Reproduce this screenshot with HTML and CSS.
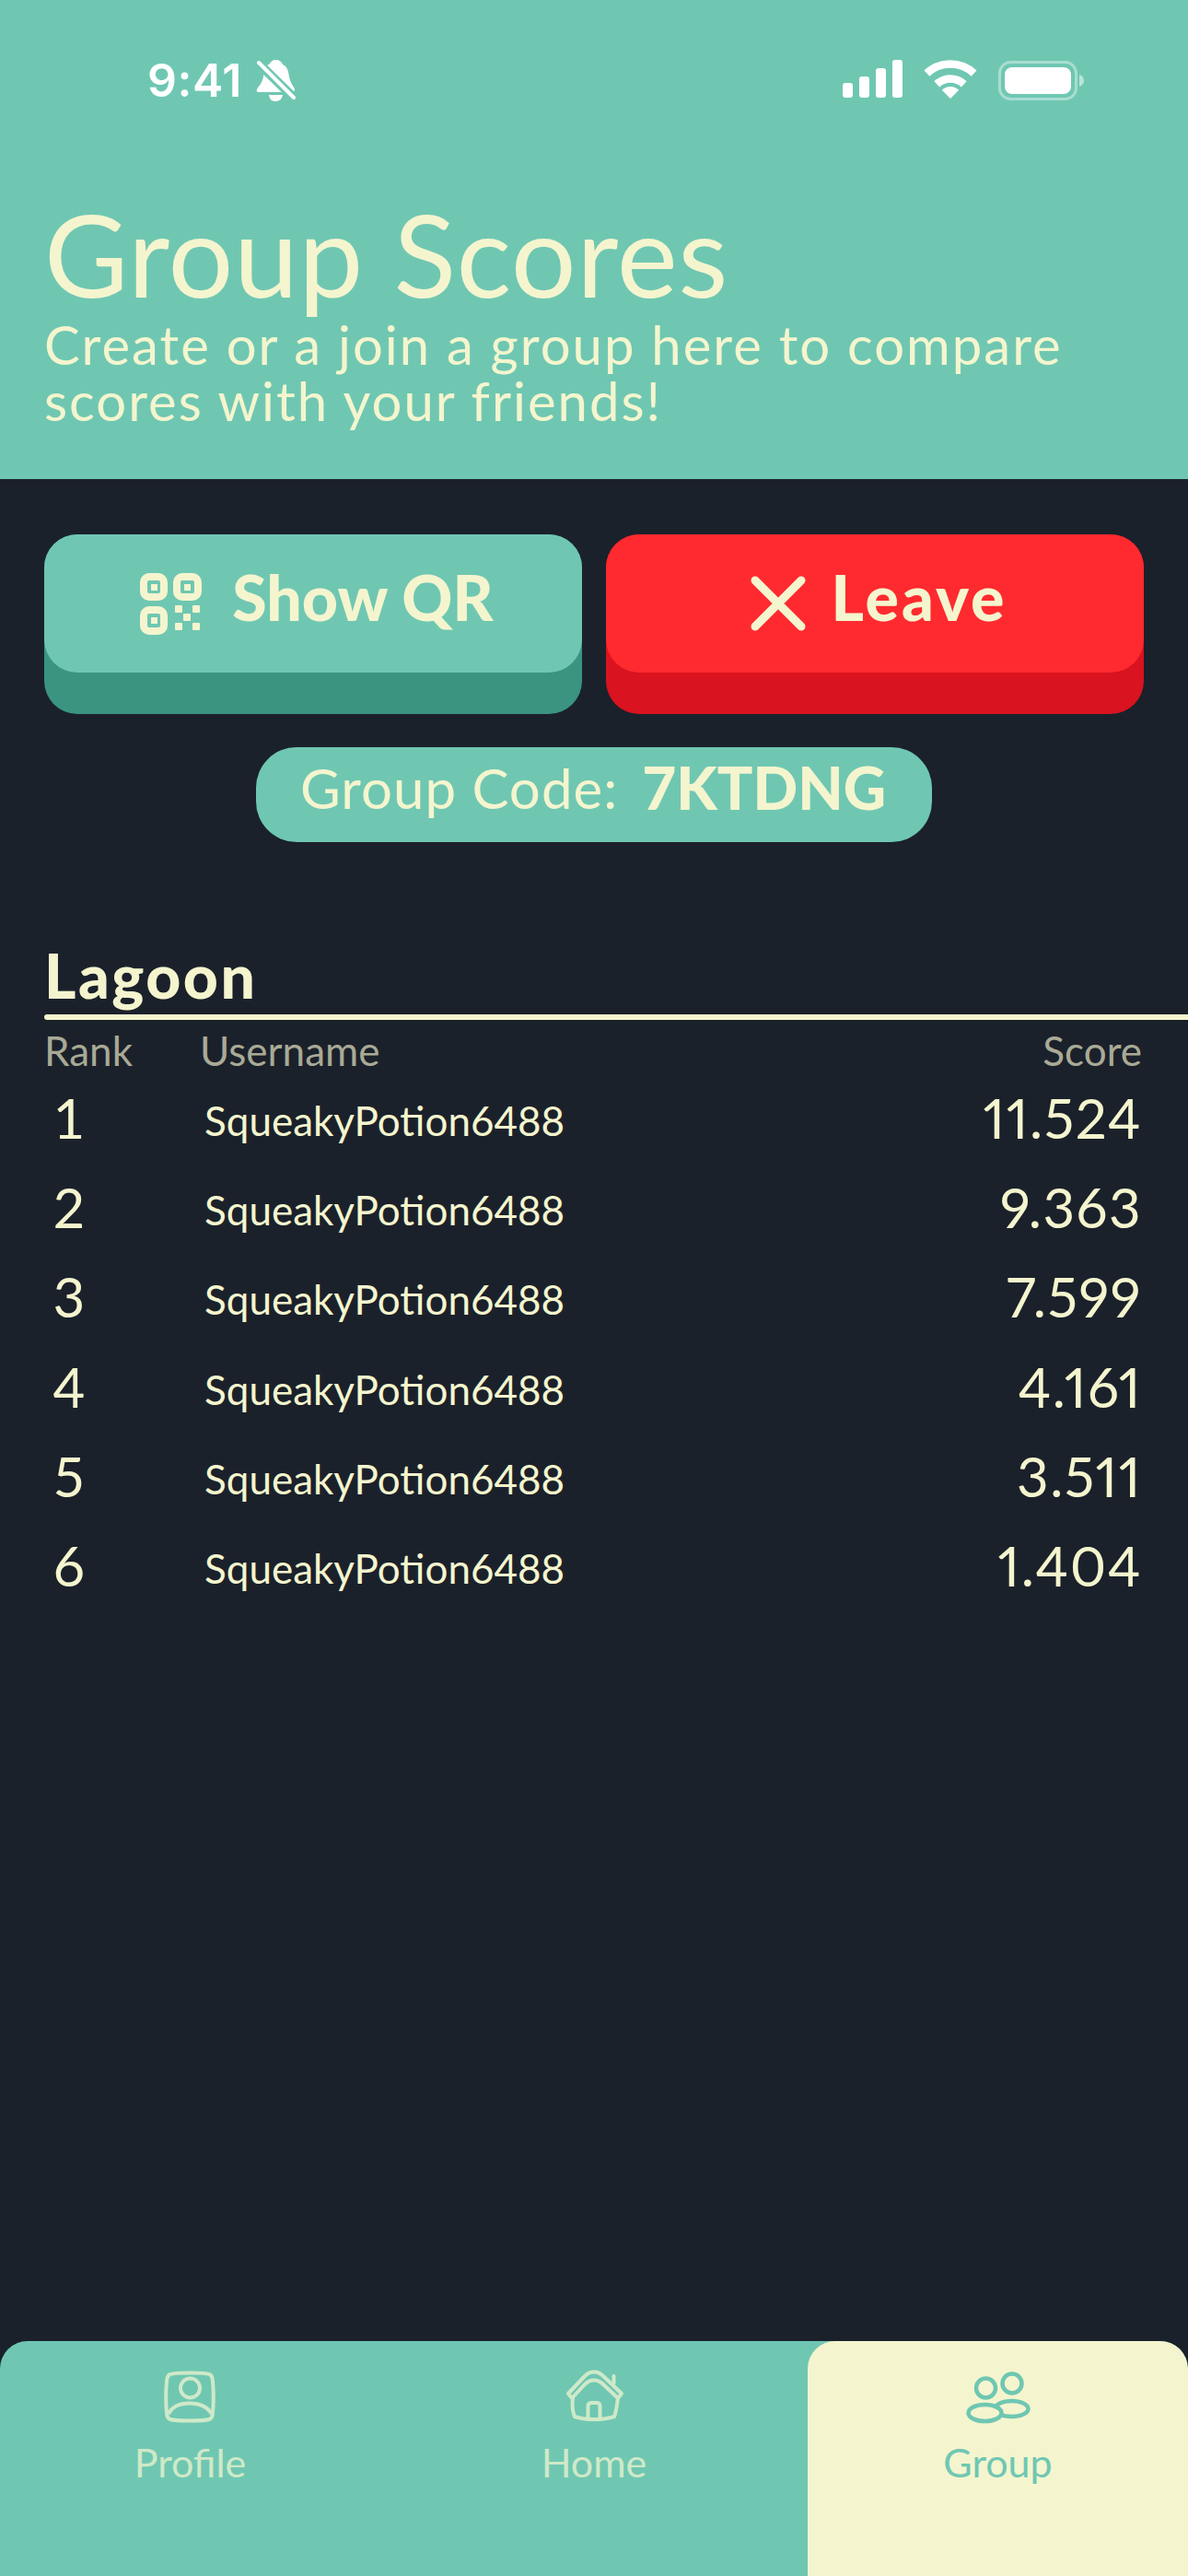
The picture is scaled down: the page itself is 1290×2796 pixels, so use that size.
FILE: index.html
```html
<!DOCTYPE html>
<html lang="en">
<head>
<meta charset="utf-8">
<title>Group Scores</title>
<link rel="stylesheet" href="styles.css">
</head>
<body>
<div class="app">
  <header class="header">
    <div class="status">
      <div class="status-left">
        <span class="time">9:41</span>
        <svg class="bell" width="43" height="47" viewBox="0 0 43 47"><path fill="#fff" d="M21 0C25 0 28 2 29 5C34 7 35 12 36 18C37 25 41 29 42 32C42 34 41 35 39 35L3 35C1 35 0 34 1 32C3 28 7 25 8 18C8 11 11 6 15 4C16 2 18 0 21 0Z"/><path fill="#fff" d="M14 38H29C28 43 25 45 21 45C17 45 15 43 14 38Z"/><path stroke="#6fc7b2" stroke-width="10" d="M0 1L43 43"/><path stroke="#fff" stroke-width="4" stroke-linecap="round" d="M3 3L41 41"/></svg>
      </div>
      <div class="status-right">
        <svg width="65" height="41" viewBox="0 0 65 41"><rect x="0" y="25" width="11" height="16" rx="3" fill="#fff"/><rect x="18" y="18" width="11" height="23" rx="3" fill="#fff"/><rect x="36" y="9" width="11" height="32" rx="3" fill="#fff"/><rect x="54" y="0" width="11" height="41" rx="3" fill="#fff"/></svg>
        <svg class="wifi" width="58" height="42" viewBox="0 0 58 42"><g fill="none" stroke="#fff" stroke-width="8.5"><path d="M3.4 14.6A37.5 37.5 0 0 1 54.6 14.6"/><path d="M14.3 26.3A21.5 21.5 0 0 1 43.7 26.3"/></g><path fill="#fff" d="M29 42L19.8 32.8A13 13 0 0 1 38.2 32.8Z"/></svg>
        <svg class="battery" width="94" height="43" viewBox="0 0 94 43"><rect x="1.5" y="1.5" width="83" height="40" rx="12" fill="none" stroke="#fff" stroke-opacity=".4" stroke-width="3"/><rect x="7" y="7" width="72" height="29" rx="8" fill="#fff"/><path fill="#fff" fill-opacity=".5" d="M88 15C91 16 93 18 93 21.500C93 25 91 27 88 28Z"/></svg>
      </div>
    </div>
    <h1 class="title">Group Scores</h1>
    <p class="subtitle">Create or a join a group here to compare<br>scores with your friends!</p>
  </header>

  <section class="actions">
    <div class="btn btn-teal">
      <div class="btn-face">
        <svg class="qr" width="67" height="67" viewBox="0 0 67 67"><g fill="none" stroke="#f4f5ce" stroke-width="8"><rect x="4" y="4" width="22" height="22" rx="6"/><rect x="40" y="4" width="23" height="22" rx="6"/><rect x="4" y="40" width="22" height="23" rx="6"/></g><g fill="#f4f5ce"><rect x="12" y="12" width="7" height="7"/><rect x="48" y="12" width="7" height="7"/><rect x="12" y="48" width="7" height="7"/><rect x="38" y="35" width="8" height="8" rx="1"/><rect x="57" y="35" width="8" height="8" rx="1"/><rect x="47" y="44" width="8" height="8" rx="1"/><rect x="38" y="54" width="8" height="8" rx="1"/><rect x="57" y="54" width="8" height="8" rx="1"/></g></svg>
        <span class="btn-label">Show QR</span>
      </div>
    </div>
    <div class="btn btn-red">
      <div class="btn-face">
        <svg class="cross" width="60" height="60" viewBox="0 0 60 60"><path d="M5 5L55 55M55 5L5 55" stroke="#f4f5ce" stroke-width="9" stroke-linecap="round"/></svg>
        <span class="btn-label">Leave</span>
      </div>
    </div>
  </section>

  <div class="code-wrap">
    <div class="code-pill"><span class="code-label">Group Code:</span><span class="code-value">7KTDNG</span></div>
  </div>

  <section class="board">
    <h2 class="board-name">Lagoon</h2>
    <div class="rule"></div>
    <div class="board-head"><span>Rank</span><span class="head-user">Username</span><span>Score</span></div>
    <div class="row"><span class="rank">1</span><span class="user">SqueakyPotion6488</span><span class="score">11.524</span></div>
    <div class="row"><span class="rank">2</span><span class="user">SqueakyPotion6488</span><span class="score">9.363</span></div>
    <div class="row"><span class="rank">3</span><span class="user">SqueakyPotion6488</span><span class="score">7.599</span></div>
    <div class="row"><span class="rank">4</span><span class="user">SqueakyPotion6488</span><span class="score">4.161</span></div>
    <div class="row"><span class="rank">5</span><span class="user">SqueakyPotion6488</span><span class="score">3.511</span></div>
    <div class="row"><span class="rank">6</span><span class="user">SqueakyPotion6488</span><span class="score">1.404</span></div>
  </section>

  <nav class="tabbar">
    <div class="tab">
      <svg width="90" height="72" viewBox="11 0 90 72"><g fill="none" stroke="#cfe9c8" stroke-width="4"><path d="M55 15.500C65 15.500 72 15.500 76 17C79 18 80 21 80 26C81 33 81 50 80 58C80 63 79 65 76 66C70 68 40 68 34 66C31 65 30 63 30 58C29 50 29 33 30 26C30 21 31 18 34 17C38 15.500 45 15.500 55 15.500Z"/><circle cx="55.500" cy="32" r="10.500"/><path d="M32 60C36 52 45 48.500 55 48.500C65 48.500 74 52 79 60"/></g></svg>
      <span class="tab-label">Profile</span>
    </div>
    <div class="tab">
      <svg width="90" height="72" viewBox="0 0 90 72"><g fill="none" stroke="#cfe9c8" stroke-width="4" stroke-linecap="round" stroke-linejoin="round"><path d="M17 38L35 19C41 13 49 13 55 19L75 38L71 43L55 28C49 22 41 22 35 28L21 43Z"/><path d="M66.500 19V27"/><path d="M22 43C21 50 22 58 24 63C35 67 55 67 67 63C69 58 70 50 71 43"/><path d="M38.500 64V52C38.500 49 40 48 42 48H48C50 48 51.500 49 51.500 52V64"/></g></svg>
      <span class="tab-label">Home</span>
    </div>
    <div class="tab tab-active">
      <svg width="90" height="72" viewBox="8.500 0 90 72"><g fill="#f4f5ce" stroke="#6fc7b2" stroke-width="4.500"><circle cx="40" cy="32" r="10.500"/><circle cx="68.500" cy="27" r="10.500"/><ellipse cx="68" cy="54.500" rx="18" ry="8.500"/><ellipse cx="39" cy="59" rx="18" ry="9"/></g></svg>
      <span class="tab-label">Group</span>
    </div>
  </nav>
</div>
</body>
</html>
```

FILE: styles.css
```css
* { box-sizing: border-box; }
html, body { margin: 0; padding: 0; }
body { background: #1b212b; font-family: "Lato", "Noto Sans", sans-serif; color: #f4f5ce; }
.app { width: 1290px; height: 2796px; display: flex; flex-direction: column; overflow: hidden; }

.header { height: 520px; background: #6fc7b2; padding: 65px 0 0 48px; flex: none; }
.status { display: flex; justify-content: space-between; height: 149px; padding: 0 112px 0 112px; }
.status-left { display: flex; align-items: flex-start; gap: 15px; }
.time { font-family: "Inter", sans-serif; font-weight: 600; font-size: 50px; line-height: 46px; letter-spacing: 0.5px; color: #fff; margin-top: -1px; }
.bell { flex: none; }
.status-right { display: flex; align-items: flex-start; gap: 23px; }
.battery { margin-top: 1px; }

.title { margin: 0; font-weight: 400; font-size: 125px; line-height: 122px; letter-spacing: 0.6px; }
.subtitle { margin: 7px 0 0; font-size: 58px; line-height: 61px; font-weight: 400; letter-spacing: 2px; }

.actions { display: grid; grid-template-columns: 1fr 1fr; gap: 26px; padding: 60px 48px 0; flex: none; }
.btn { height: 195px; border-radius: 36px; }
.btn-face { height: 150px; border-radius: 36px; display: flex; justify-content: center; align-items: flex-start; padding: 35px 0 0 8px; }
.btn-teal { background: #3a9480; }
.btn-teal .btn-face { background: #6fc7b2; }
.btn-red { background: #d9131f; }
.btn-red .btn-face { background: #ff2a2f; }
.btn-label { font-weight: 900; font-size: 68px; line-height: 66px; }
.btn-red .btn-label { letter-spacing: 3px; }
.qr { margin: 7px 33px 0 0; }
.cross { margin: 10px 28px 0 0; }

.code-wrap { display: flex; justify-content: center; padding-top: 36px; flex: none; }
.code-pill { height: 103px; background: #6fc7b2; border-radius: 44px; display: flex; gap: 26px; padding: 14px 50px 0 48px; }
.code-label { font-size: 60px; line-height: 60px; letter-spacing: 1px; }
.code-value { font-size: 64px; line-height: 60px; font-weight: 900; }

.board { padding-left: 48px; margin-top: 112px; flex: none; }
.board-name { margin: 0; font-size: 66px; line-height: 66px; font-weight: 900; letter-spacing: 2.5px; }
.rule { height: 6px; margin-top: 9px; background: #f4f5ce; border-radius: 3px 0 0 3px; }
.board-head { display: flex; margin-top: 11px; padding-right: 50px; font-size: 44px; line-height: 44px; color: #a9aa96; }
.head-user { margin-left: 73px; margin-right: auto; }
.row { height: 97.2px; display: flex; padding-right: 50px; align-items: flex-start; }
.board-head + .row { margin-top: 3px; }
.rank { width: 54px; text-align: center; font-size: 60px; line-height: 97px; }
.user { margin-left: 120px; margin-right: auto; font-size: 44px; line-height: 97px; padding-top: 3px; }
.score { font-size: 60px; line-height: 97px; letter-spacing: 1.5px; font-variant-numeric: proportional-nums; }

.tabbar { margin-top: auto; height: 255px; flex: none; background: #6fc7b2; border-radius: 30px 30px 0 0; display: flex; gap: 25.5px; overflow: hidden; }
.tab { width: 413px; padding-top: 19px; display: flex; flex-direction: column; align-items: center; color: #cfe9c8; }
.tab-active { background: #f4f5ce; color: #6fc7b2; border-radius: 30px 30px 0 0; }
.tab-label { margin-top: 19px; font-size: 43px; line-height: 44px; }
```
